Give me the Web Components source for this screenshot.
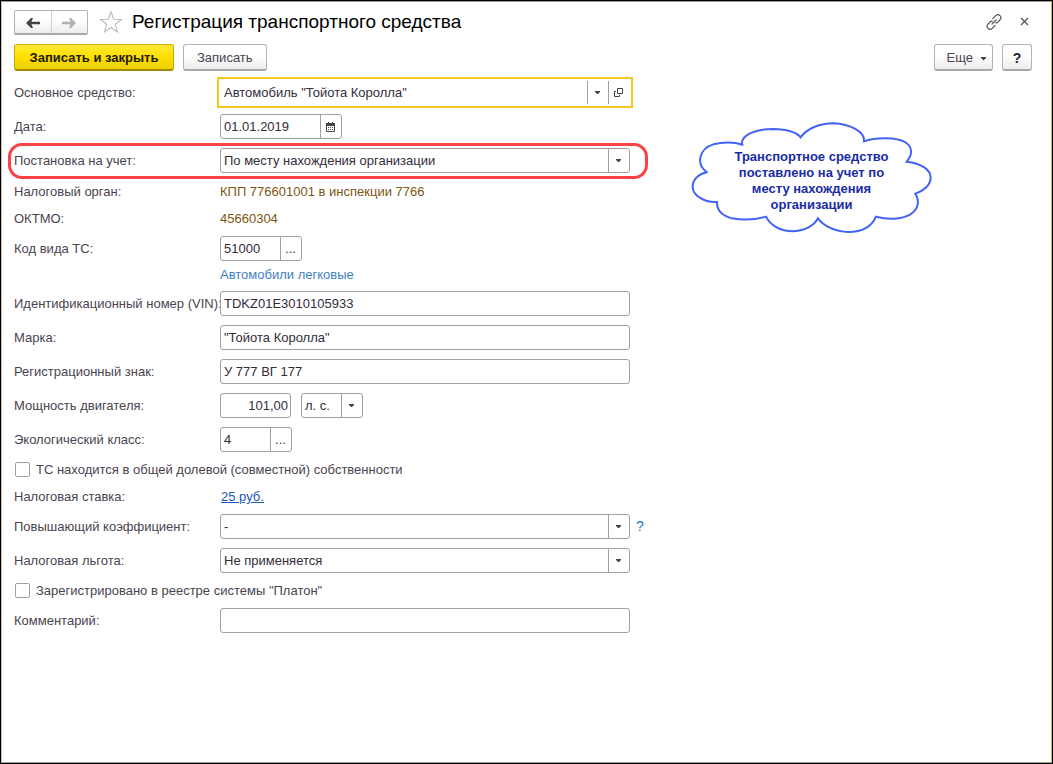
<!DOCTYPE html>
<html lang="ru">
<head>
<meta charset="utf-8">
<title>Регистрация транспортного средства</title>
<style>
body { margin: 0; font: 13px/18px "Liberation Sans", Arial, sans-serif; color: #4a4450; background: #fff; }
</style>
</head>
<body>
<vehicle-form></vehicle-form>
<script>
const define = (name, css, html) => customElements.define(name, class extends HTMLElement {
  connectedCallback() {
    if (this.shadowRoot) return;
    const root = this.attachShadow({ mode: "open" });
    root.innerHTML = `<style>*{box-sizing:border-box}${css}</style>${typeof html === "function" ? html(this) : html}`;
  }
});
const attr = (el, name) => (el.getAttribute(name) || "").replace(/&/g, "&amp;").replace(/"/g, "&quot;");
const arrow = `<svg width="5" height="3" viewBox="0 0 5 3" aria-hidden="true"><path d="M0 0h5v1L3 3H2L0 1z" fill="#444"/></svg>`;

const boxCss = `
  .box { display: flex; height: 25px; border: 1px solid #a0a0a0; border-radius: 3px; background: #fff; }
  .box input, .box select { flex: 1; min-width: 0; width: 100%; border: 0; margin: 0; padding: 0 3px; outline: 0; background: none;
    font: inherit; color: #332c3a; appearance: none; height: 23px; border-radius: 0; }
  .box button, .mark { flex: none; width: 21px; height: 23px; padding: 0 1px 0 0; margin: 0; border: 0; border-left: 1px solid #a0a0a0;
    background: none; display: flex; align-items: center; justify-content: center; font: inherit; color: #333; }
  svg { flex: none; }
  .pick { flex: 1; min-width: 0; display: grid; grid-template-columns: 1fr 21px; }
  .pick select { grid-area: 1 / 1 / 2 / 3; padding-right: 22px; }
  .pick .mark { grid-area: 1 / 2; pointer-events: none; }`;
const select = (el, id) => `<span class="pick"><select id="${id}" aria-label="${attr(el, "label")}"><option>${attr(el, "value")}</option></select><span class="mark">${arrow}</span></span>`;
const rowCss = `
  :host { display: grid; grid-template-columns: 206px minmax(0, 1fr); align-items: center; position: relative; }
  label { white-space: nowrap; }
  .line { display: flex; align-items: center; gap: 10px; position: relative; }
  .box { width: 100%; }
  :host([size="date"]) .box { width: 122px; }
  :host([size="code"]) .box { width: 82px; }
  :host([size="class"]) .box { width: 72px; }
  :host([size="number"]) .box { width: 71px; }
  :host([size="number"]) input { text-align: right; padding-right: 2px; }`;

const icons = {
  calendar: `<svg width="9" height="10" viewBox="0 0 9 10" aria-hidden="true"><path d="M.5 2.5h8v7h-8z" fill="#fff" stroke="#444"/><path d="M0 1h9v3H0zM2 0h1v2H2zM6 0h1v2H6z" fill="#444"/><path d="M2 5h1v1H2zM4 5h1v1H4zM6 5h1v1H6zM2 7h1v1H2zM4 7h1v1H4zM6 7h1v1H6z" fill="#444"/></svg>`,
  open: `<svg width="9" height="9" viewBox="0 0 9 9" aria-hidden="true"><path d="M3.5.5h5v5h-5zM2 3.5H.5v5h5V7" fill="none" stroke="#444"/></svg>`,
  more: `...`
};
const names = { calendar: "Календарь", open: "Открыть", more: "Выбрать" };

define("text-field", boxCss + rowCss, el => `
  <label for="c">${attr(el, "label")}</label>
  <div class="line"><div class="box"><input id="c" value="${attr(el, "value")}">${
    el.hasAttribute("action") ? `<button type="button" aria-label="${names[attr(el, "action")]}">${icons[attr(el, "action")]}</button>` : ""
  }</div><slot></slot></div>`);

define("select-field", boxCss + rowCss + `
  :host([active]) .box { border-color: transparent; outline: 2px solid #f5c722; outline-offset: 1px; border-radius: 0; }
  :host([marked])::after { content: ""; position: absolute; inset: -5px -18px -6px -6px; border: 3px solid #fb4246; border-radius: 14px; pointer-events: none; }
  slot { display: block; position: absolute; left: 100%; padding-left: 6px; }`, el => `
  <label for="c">${attr(el, "label")}</label>
  <div class="line"><div class="box">${select(el, "c")}${
    el.hasAttribute("active") ? `<button type="button" aria-label="Открыть">${icons.open}</button>` : ""
  }</div><slot></slot></div>`);

define("unit-select", boxCss + `:host { display: block; width: 62px; }`, el => `<div class="box">${select(el, "u")}</div>`);

define("info-row", `
  :host { display: grid; grid-template-columns: 206px minmax(0, 1fr); height: 18px; line-height: 20px; }
  dl, dt, dd { margin: 0; display: contents; }
  dd span { color: #7d5512; }
  ::slotted(a) { color: #1b57b8; padding-left: 1px; }`, el => `<dl><dt><span>${attr(el, "label")}</span></dt><dd><span><slot></slot></span></dd></dl>`);

define("hint-text", `:host { display: block; margin: -5px 0 0 206px; height: 17px; line-height: 19px; color: #3f7fc4; }`, `<slot></slot>`);

define("check-row", `
  :host { display: block; }
  label { display: flex; align-items: center; gap: 6px; height: 17px; }
  input { appearance: none; width: 15px; height: 15px; margin: 0 0 0 1px; border: 1px solid #a0a0a0; border-radius: 2px; background: #fff; }`,
  `<label><input type="checkbox"><span><slot></slot></span></label>`);

define("push-button", `
  :host { display: block; }
  button { display: flex; align-items: center; justify-content: center; gap: 8px; height: 27px; padding: 2px 13px 0; border: 1px solid #b4b4b4; border-bottom: 2px solid #a8a8a8;
    border-radius: 3px; background: linear-gradient(#fff 40%, #ededed); font: inherit; color: #4a4450; white-space: nowrap; }
  :host([kind="main"]) button { min-width: 160px; font-weight: bold; color: #221c00; background: linear-gradient(#ffe936, #fedf00 50%, #ecd000); border-color: #d0b000 #c8ab00 #a58c00; }
  :host([kind="menu"]) button { padding: 2px 6px 0 12px; }
  :host([kind="help"]) button { width: 30px; padding: 2px 0 0; font-size: 14px; font-weight: bold; color: #222; }`,
  el => `<button type="button"><slot></slot>${attr(el, "kind") === "menu" ? arrow : ""}</button>`);

define("history-nav", `
  :host { display: flex; width: 74px; height: 25px; border: 1px solid #b4b4b4; border-bottom: 2px solid #a8a8a8; border-radius: 2px; background: linear-gradient(#fff 40%, #ededed); box-sizing: border-box; }
  button { flex: 1; padding: 2px 0 0; border: 0; background: none; display: flex; align-items: center; justify-content: center; color: #444; }
  button + button { border-left: 1px solid #d0d0d0; color: #b0b0b0; }`, `
  <button type="button" aria-label="Назад"><svg width="14" height="10" viewBox="0 0 14 10"><path d="M0 5L5 0h2L5.500 3.800H14v2.400H5.500L7 10H5z" fill="currentColor"/></svg></button>
  <button type="button" aria-label="Вперед"><svg width="14" height="10" viewBox="0 0 14 10"><path d="M14 5L9 0H7l1.500 3.800H0v2.400h8.500L7 10h2z" fill="currentColor"/></svg></button>`);

define("window-title", `
  :host { display: flex; align-items: center; height: 25px; }
  h1 { margin: 0 0 2px 9px; font-size: 19px; line-height: 24px; font-weight: normal; color: #000; flex: 1; white-space: nowrap; }
  button { padding: 0; border: 0; background: none; display: flex; }
  .star { margin: 0 0 2px 11px; }
  .tools { display: flex; align-items: center; gap: 18px; padding: 0 3px 2px 0; }`, `
  <history-nav></history-nav>
  <button class="star" type="button" aria-label="В избранное"><svg width="24" height="24" viewBox="0 0 24 24"><path d="M12 1.8l2.7 7.4 7.8.3-6.2 4.8 2.2 7.6L12 17.5l-6.5 4.4 2.2-7.6L1.5 9.500l7.800-.3z" fill="none" stroke="#b4bac6" stroke-width="1.1"/></svg></button>
  <h1><slot></slot></h1>
  <div class="tools">
    <button type="button" aria-label="Ссылка"><svg width="16" height="16" viewBox="0 0 16 16" fill="none" stroke="#555" stroke-width="1.2" stroke-linecap="round"><path d="M6.800 4.600L9.800 1.600a3 3 0 0 1 4.200 0a3 3 0 0 1 0 4.200L11.400 8.600L9.800 8.900M9.200 11.400L6.200 14.400a3 3 0 0 1-4.200 0a3 3 0 0 1 0-4.200L4.600 7.400L6.200 7.100M6 10l4-4"/></svg></button>
    <button type="button" aria-label="Закрыть"><svg width="9" height="9" viewBox="0 0 9 9"><path d="M1 1l7 7M8 1L1 8" stroke="#555" stroke-width="1.3"/></svg></button>
  </div>`);

define("cloud-note", `
  :host { display: grid; width: 241px; height: 113px; place-items: center; }
  svg { grid-area: 1 / 1; }
  p { grid-area: 1 / 1; margin: 0; padding-top: 4px; width: 170px; text-align: center; font-weight: bold; line-height: 16px; color: #1a2ba6; }`, `
  <svg width="241" height="113" viewBox="33 36 723 339" aria-hidden="true"><path fill="#fff" stroke="#4263f5" stroke-width="6" d="M80 186C45 160 60 115 100 103C130 96 165 97 190 105M186 106C180 75 225 57 280 57C320 58 350 67 362 82C380 55 420 40 460 40C510 42 555 65 552 94C590 80 650 82 675 96C700 112 697 135 680 155C725 160 752 180 752 203C752 225 730 243 706 251C722 275 712 300 690 314C665 328 625 330 588 320C575 350 545 366 505 366C465 364 430 348 414 325C400 350 370 362 340 364C300 364 270 345 258 320C225 330 185 330 155 325C125 316 110 300 111 276C70 278 38 255 38 230C38 205 60 190 83 186"/></svg>
  <p><slot></slot></p>`);

define("vehicle-form", `
  :host { display: block; box-sizing: border-box; min-height: 100vh; border: 1px solid #000; padding: 9px 20px 20px 13px;
    box-shadow: inset 1px 0 #c8c0b4, inset 0 1px #a09898, inset -1px 0 #cfc060, inset 0 -1px #a0a090; }
  .bar { display: flex; gap: 9px; margin-top: 9px; }
  .space { flex: 1; }
  main { display: flex; align-items: flex-start; gap: 61px; margin-top: 9px; }
  form { flex: 0 1 616px; min-width: 0; display: flex; flex-direction: column; gap: 9px; }
  cloud-note { flex: none; margin-top: 42px; }
  .help { color: #1478c8; text-decoration: none; font-size: 14px; }`, `
  <window-title>Регистрация транспортного средства</window-title>
  <div class="bar">
    <push-button kind="main">Записать и закрыть</push-button>
    <push-button>Записать</push-button>
    <span class="space"></span>
    <push-button kind="menu">Еще</push-button>
    <push-button kind="help">?</push-button>
  </div>
  <main>
    <form>
      <select-field active label="Основное средство:" value='Автомобиль "Тойота Королла"'></select-field>
      <text-field size="date" action="calendar" label="Дата:" value="01.01.2019"></text-field>
      <select-field marked label="Постановка на учет:" value="По месту нахождения организации"></select-field>
      <info-row label="Налоговый орган:">КПП 776601001 в инспекции 7766</info-row>
      <info-row label="ОКТМО:">45660304</info-row>
      <text-field size="code" action="more" label="Код вида ТС:" value="51000"></text-field>
      <hint-text>Автомобили легковые</hint-text>
      <text-field label="Идентификационный номер (VIN):" value="TDKZ01E3010105933"></text-field>
      <text-field label="Марка:" value='"Тойота Королла"'></text-field>
      <text-field label="Регистрационный знак:" value="У 777 ВГ 177"></text-field>
      <text-field size="number" label="Мощность двигателя:" value="101,00"><unit-select label="Единица мощности" value="л. с."></unit-select></text-field>
      <text-field size="class" action="more" label="Экологический класс:" value="4"></text-field>
      <check-row>ТС находится в общей долевой (совместной) собственности</check-row>
      <info-row label="Налоговая ставка:"><a href="#rate">25 руб.</a></info-row>
      <select-field label="Повышающий коэффициент:" value="-"><a class="help" href="#help">?</a></select-field>
      <select-field label="Налоговая льгота:" value="Не применяется"></select-field>
      <check-row>Зарегистрировано в реестре системы "Платон"</check-row>
      <text-field label="Комментарий:"></text-field>
    </form>
    <cloud-note>Транспортное средство поставлено на учет по месту нахождения организации</cloud-note>
  </main>`);
</script>
</body>
</html>
